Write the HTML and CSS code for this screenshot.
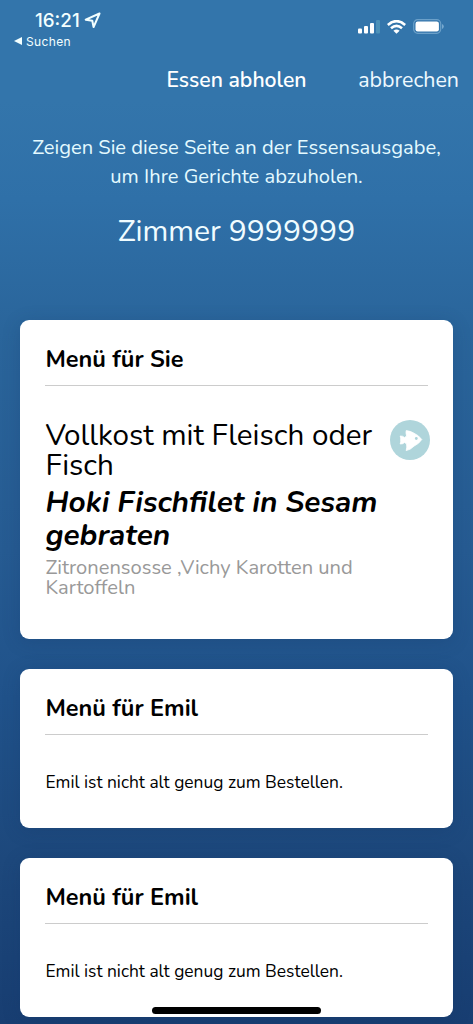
FILE: index.html
```html
<!DOCTYPE html>
<html lang="de">
<head>
<meta charset="utf-8">
<title>Essen abholen</title>
<link rel="stylesheet" href="styles.css">
</head>
<body>
<div class="screen">
  <header class="status">
    <div class="status-left">
      <div class="clock"><span class="time">16:21</span>
        <svg class="location" width="16" height="16" viewBox="0 0 16 16"><path d="M14.600 1.400 1.600 7.200 7.800 8.200 9 14.200Z" fill="none" stroke="currentColor" stroke-width="1.900" stroke-linejoin="round"/></svg>
      </div>
      <div class="back"><svg width="8" height="8" viewBox="0 0 8 8"><path d="M0 4 8 0V8Z" fill="currentColor"/></svg><span class="back-label">Suchen</span></div>
    </div>
    <div class="status-icons">
      <svg width="22" height="14" viewBox="0 0 22 14" fill="#fff"><rect x="0" y="8.500" width="4" height="5" rx="1"/><rect x="6" y="6" width="4" height="7.500" rx="1"/><rect x="12" y="3" width="4" height="10.500" rx="1"/><rect x="18" y="0" width="4" height="13.500" rx="1" fill="#4d91b8"/></svg>
      <svg width="19" height="14" viewBox="0 0 19 14" fill="none" stroke="#fff" stroke-width="2.600"><path d="M.8 5Q9.500-2.700 18.200 5M4 8.300Q9.500 3.500 15 8.300"/><path d="M6.400 10.700Q9.500 8.100 12.600 10.700L9.500 13.800Z" fill="#fff" stroke="none"/></svg>
      <svg width="31" height="15" viewBox="0 0 31 15"><rect x=".7" y=".7" width="27" height="13.600" rx="4" fill="none" stroke="#6ba0c9" stroke-width="1.200"/><rect x="2.500" y="2.500" width="23.400" height="10" rx="2.200" fill="#fff"/><path d="M29 5Q30.800 5.700 30.800 7.500T29 10Z" fill="#78a9cf"/></svg>
    </div>
  </header>
  <nav class="nav"><span class="nav-title">Essen abholen</span><span class="cancel">abbrechen</span></nav>
  <section class="intro">
    <p class="hint">Zeigen Sie diese Seite an der Essensausgabe,<br>um Ihre Gerichte abzuholen.</p>
    <p class="room">Zimmer 9999999</p>
  </section>
  <main class="cards">
    <article class="card card-meal">
      <h2 class="card-title">Menü für Sie</h2>
      <div class="meal">
        <div class="meal-text">
          <p class="diet">Vollkost mit Fleisch oder<br>Fisch</p>
          <p class="dish">Hoki Fischfilet in Sesam<br>gebraten</p>
          <p class="sides">Zitronensosse ,Vichy Karotten und<br>Kartoffeln</p>
        </div>
        <svg class="fish" width="40" height="40" viewBox="0 0 40 40"><circle cx="20" cy="20" r="20" fill="#afd5db"/><path d="M10.200 16Q13 15.800 14.500 17.600L16.600 16Q15.600 12.500 16.200 10.600Q20.500 11 24 13.200Q28.500 15.200 31.800 19.500Q28.800 24 24.200 26Q20.500 29.800 16.200 30.600Q17.200 27 16.600 24L14.500 22.400Q13 24.200 10.200 24Q11 21.800 10.700 20Q11 18.200 10.200 16Z" fill="#fff" stroke="#fff" stroke-width=".8" stroke-linejoin="round"/><circle cx="26.300" cy="18.500" r="1.400" fill="#afd5db"/></svg>
      </div>
    </article>
    <article class="card card-note"><h2 class="card-title">Menü für Emil</h2><p class="note">Emil ist nicht alt genug zum Bestellen.</p></article>
    <article class="card card-note"><h2 class="card-title">Menü für Emil</h2><p class="note">Emil ist nicht alt genug zum Bestellen.</p></article>
  </main>
  <div class="home-bar"></div>
</div>
</body>
</html>
```
FILE: styles.css
```css
* { box-sizing: border-box; }
body { margin: 0; font-family: Nunito, Lato, sans-serif; color: #000; }
h2, p { margin: 0; font-weight: 400; }
svg { display: block; flex: none; }
.screen { position: relative; width: 473px; height: 1024px; overflow: hidden; white-space: nowrap; background: linear-gradient(#3375ab 0, #3375ab 100px, #2f70a8 200px, #2a659b 330px, #265b92 550px, #20528a 700px, #1d487c 860px, #183e72 1024px); }
.status { height: 55px; padding: 9px 29px 0 14px; display: flex; justify-content: space-between; color: #f3ffff; font-family: Inter, sans-serif; }
.clock { display: flex; align-items: center; gap: 4px; height: 22px; padding-left: 21px; }
.time { font-size: 18.800px; font-weight: 500; }
.location { width: 17px; height: 17px; }
.back { display: flex; align-items: center; gap: 4px; height: 20px; }
.back-label { font-size: 12px; letter-spacing: .35px; font-weight: 400; }
.status-icons { display: flex; align-items: center; gap: 7px; height: 35px; }
.nav { display: grid; grid-template-columns: 1fr auto 1fr; align-items: center; height: 49px; padding: 0 14px; font-size: 21.400px; color: #eef9ff; }
.nav-title { grid-column: 2; font-size: 21.200px; font-weight: 600; color: #fff; }
.cancel { justify-self: end; }
.intro { height: 216.400px; padding-top: 29px; text-align: center; color: #e4faff; }
.hint { font-size: 20.150px; line-height: 29px; }
.room { margin-top: 21px; font-size: 30.150px; line-height: 40px; color: #f0fcff; }
.cards { display: flex; flex-direction: column; gap: 30.500px; padding: 0 20px; }
.card { padding: 0 25.400px; border-radius: 9px; background: #fff; box-shadow: 0 3px 18px rgba(20, 50, 95, .22); }
.card-meal { height: 318.600px; }
.card-note { height: 158.500px; }
.card-title { height: 66px; padding-top: 23.900px; border-bottom: 1px solid #ccc; font-size: 23.500px; line-height: 30px; font-weight: 700; }
.meal { display: flex; justify-content: space-between; padding-top: 34px; margin-right: -2.500px; }
.diet { font-size: 29.650px; line-height: 30px; }
.dish { margin-top: 6px; font-size: 29.850px; line-height: 33px; font-weight: 700; font-style: italic; }
.sides { margin-top: 6px; font-size: 20.150px; line-height: 20px; color: #999; }
.note { padding-top: 35.500px; font-size: 17.400px; line-height: 22px; }
.home-bar { position: absolute; left: 152px; top: 1007px; width: 169px; height: 7px; border-radius: 4px; background: #000; }
```
